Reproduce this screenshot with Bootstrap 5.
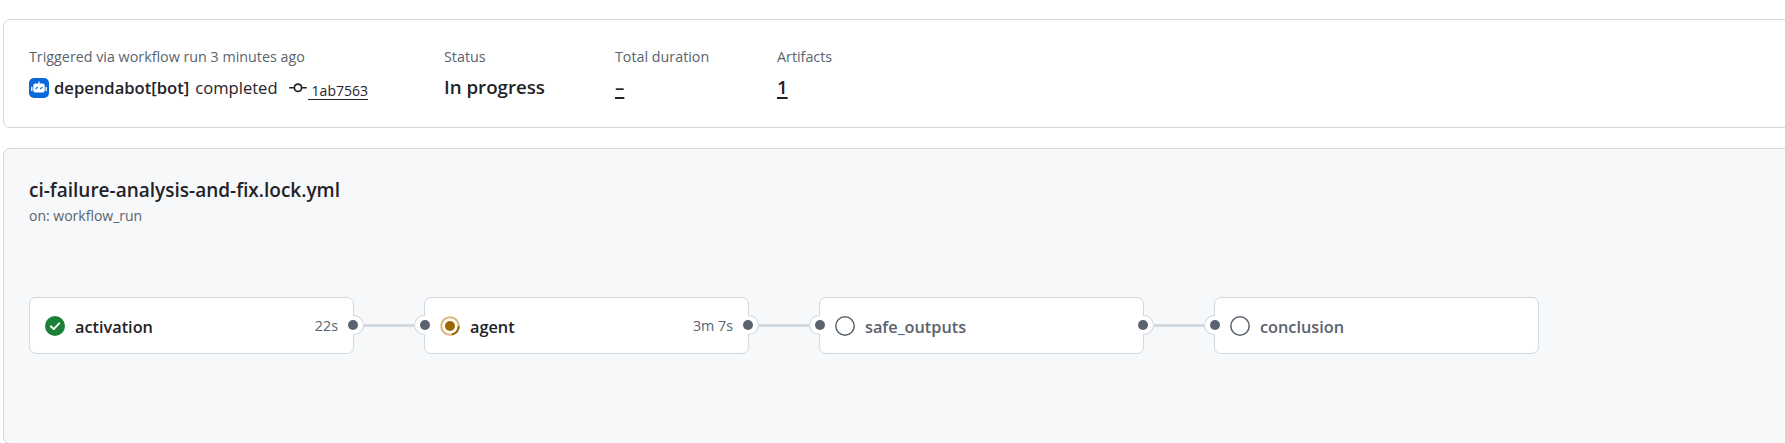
<!DOCTYPE html>
<html lang="en">
<head>
<meta charset="utf-8">
<title>Workflow run</title>
<link rel="stylesheet" href="https://cdn.jsdelivr.net/npm/bootstrap@5.3.0/dist/css/bootstrap.min.css">
<style>
html, body { height: 100%; }
body { background: #fff; color: #1f2328; font-family: "Open Sans", "Noto Sans", sans-serif; overflow: hidden; padding: 19px 0 0 3px; }
.run-panel { border: 1px solid #d1d9e0; border-radius: 7px; margin-right: -12px; }
.summary-panel { height: 109px; padding: 28px 25px 0; margin-bottom: 20px; }
.graph-panel { background: #f6f8fa; height: 296px; padding: 29px 25px 0; }
.label-text { font-size: 14.3px; line-height: 18px; color: #59636e; }
.summary-col-1 { width: 415px; }
.summary-col-2 { width: 171px; }
.summary-col-3 { width: 162px; }
.value-row { height: 24px; margin-top: 10px; font-size: 16.6px; line-height: 24px; white-space: nowrap; }
.value-big { font-size: 18.7px; font-weight: 600; line-height: 24px; margin-top: 9px; }
.value-link { color: #1f2328; text-decoration: underline; text-decoration-thickness: 2px; text-underline-offset: 3px; }
.bot-avatar { width: 20px; height: 20px; margin-right: 5px; flex: none; }
.strong-name { font-weight: 600; margin-right: 1.700px; }
.commit-icon { width: 18px; height: 18px; margin: 0 1px 0 11px; flex: none; }
.commit-sha { font-size: 14px; color: #1f2328; text-decoration: none; border-bottom: 1px solid #1f2328; padding: 0 0 0 4px; line-height: 17px; margin-top: 5px; }
.graph-title { font-size: 19px; font-weight: 600; line-height: 24px; margin: 0; }
.graph-sub { font-size: 14px; line-height: 18px; color: #59636e; margin-top: 5px; }
.graph-row { margin-top: 72px; }
.job-node { position: relative; width: 325px; height: 57px; background: #fff; border: 1px solid #d1d9e0; border-radius: 7px; padding: 0 15px 0 15px; flex: none; }
.job-name { font-size: 16.3px; font-weight: 600; margin-left: 10px; color: #1f2328; position: relative; top: 2px; }
.job-muted { color: #59636e; }
.job-time { font-size: 14.3px; color: #59636e; margin-left: auto; }
.job-icon { width: 20px; height: 20px; flex: none; }
.link-line { width: 70px; height: 3px; background: #d1d9e0; flex: none; }
.port { position: absolute; top: 17px; width: 11px; height: 20px; background: #fff; border: 1px solid #d1d9e0; }
.port::after { content: ""; position: absolute; top: 4px; width: 10px; height: 10px; border-radius: 50%; background: #59636e; }
.port-out { right: -11px; border-left: 0; border-radius: 0 10px 10px 0; }
.port-out::after { left: -5px; }
.port-in { left: -11px; border-right: 0; border-radius: 10px 0 0 10px; }
.port-in::after { right: -5px; }
</style>
</head>
<body>
<section class="run-panel summary-panel d-flex bg-white">
  <div class="summary-col-1">
    <div class="label-text">Triggered via workflow run 3 minutes ago</div>
    <div class="value-row d-flex align-items-center">
      <svg class="bot-avatar" viewBox="0 0 20 20"><rect width="20" height="20" rx="5" fill="#0969da"/><path d="M10 3.5v2M6.5 6.2h7a1.6 1.6 0 0 1 1.6 1.6v4.6a1.6 1.6 0 0 1-1.6 1.6h-7a1.6 1.6 0 0 1-1.6-1.6V7.800a1.600 1.600 0 0 1 1.600-1.600z" fill="#fff" stroke="#fff" stroke-width="1.200"/><path d="M2.800 9.500v3M17.200 9.500v3" stroke="#fff" stroke-width="1.400" stroke-linecap="round"/><path d="M7 10.500l1.300-1M11.700 10.500l1.300-1" stroke="#0969da" stroke-width="1.300" stroke-linecap="round"/></svg>
      <span class="strong-name">dependabot[bot]</span><span>&nbsp;completed</span>
      <svg class="commit-icon" viewBox="0 0 16 16" fill="#1f2328"><path d="M11.930 8.500a4.002 4.002 0 0 1-7.860 0H.750a.750.750 0 0 1 0-1.500h3.320a4.002 4.002 0 0 1 7.860 0h3.320a.750.750 0 0 1 0 1.500Zm-1.430-.750a2.500 2.500 0 1 0-5 0 2.500 2.500 0 0 0 5 0Z"/></svg>
      <a class="commit-sha" href="#">1ab7563</a>
    </div>
  </div>
  <div class="summary-col-2">
    <div class="label-text">Status</div>
    <div class="value-big">In progress</div>
  </div>
  <div class="summary-col-3">
    <div class="label-text">Total duration</div>
    <div class="value-big"><a class="value-link" href="#">–</a></div>
  </div>
  <div>
    <div class="label-text">Artifacts</div>
    <div class="value-big"><a class="value-link" href="#">1</a></div>
  </div>
</section>
<section class="run-panel graph-panel">
  <h2 class="graph-title">ci-failure-analysis-and-fix.lock.yml</h2>
  <div class="graph-sub">on: workflow_run</div>
  <div class="graph-row d-flex align-items-center">
    <div class="job-node d-flex align-items-center">
      <svg class="job-icon" viewBox="0 0 20 20"><circle cx="10" cy="10" r="10" fill="#1a7f37"/><path d="M5.800 10.300l2.900 2.800 5.500-5.800" fill="none" stroke="#fff" stroke-width="1.900" stroke-linecap="round" stroke-linejoin="round"/></svg>
      <span class="job-name">activation</span><span class="job-time">22s</span>
      <span class="port port-out"></span>
    </div>
    <div class="link-line"></div>
    <div class="job-node d-flex align-items-center">
      <span class="port port-in"></span>
      <svg class="job-icon" viewBox="0 0 20 20"><circle cx="10" cy="10" r="8.800" fill="none" stroke="#d9b77a" stroke-width="2"/><path d="M18.800 10a8.800 8.800 0 0 1-7 8.600" fill="none" stroke="#9a6700" stroke-width="2"/><circle cx="10" cy="10" r="5" fill="#9a6700"/></svg>
      <span class="job-name">agent</span><span class="job-time">3m 7s</span>
      <span class="port port-out"></span>
    </div>
    <div class="link-line"></div>
    <div class="job-node d-flex align-items-center">
      <span class="port port-in"></span>
      <svg class="job-icon" viewBox="0 0 20 20"><circle cx="10" cy="10" r="9.200" fill="none" stroke="#59636e" stroke-width="1.500"/></svg>
      <span class="job-name job-muted">safe_outputs</span>
      <span class="port port-out"></span>
    </div>
    <div class="link-line"></div>
    <div class="job-node d-flex align-items-center">
      <span class="port port-in"></span>
      <svg class="job-icon" viewBox="0 0 20 20"><circle cx="10" cy="10" r="9.200" fill="none" stroke="#59636e" stroke-width="1.500"/></svg>
      <span class="job-name job-muted">conclusion</span>
    </div>
  </div>
</section>
<script src="https://cdn.jsdelivr.net/npm/bootstrap@5.3.0/dist/js/bootstrap.bundle.min.js"></script>
</body>
</html>
